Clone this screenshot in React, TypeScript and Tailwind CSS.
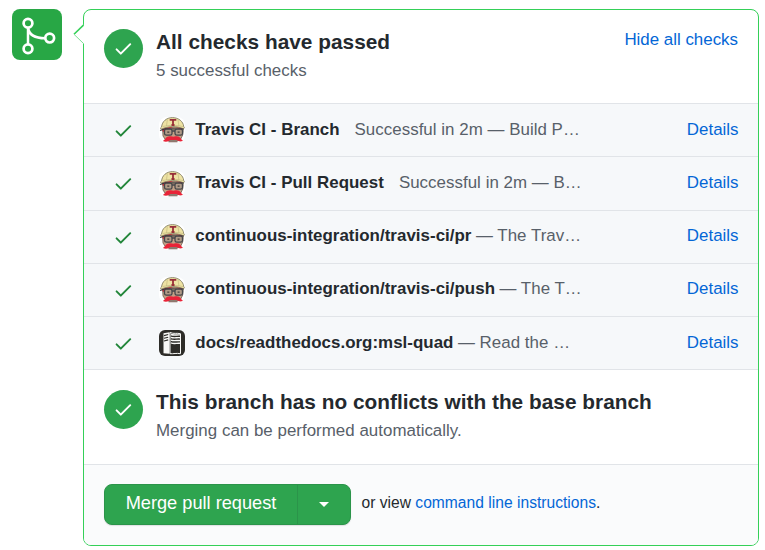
import React from "react";

const CHECK =
  "M13.78 4.22a.75.75 0 010 1.06l-7.25 7.25a.75.75 0 01-1.06 0L2.22 9.28a.75.75 0 011.06-1.06L6 10.94l6.72-6.72a.75.75 0 011.06 0z";

function Check({ className }: { className: string }) {
  return (
    <svg viewBox="0 0 16 16" className={`size-[20.8px] ${className}`} fill="currentColor">
      <path d={CHECK} />
    </svg>
  );
}

function MergeIcon() {
  return (
    <svg viewBox="0 0 50 51" className="h-[51px] w-[50px]" fill="none" stroke="#fff">
      <path d="M16 19v21M16.2 19c.8 7 6 10.200 17 10.200" strokeWidth="2.500" />
      <g strokeWidth="2.700" fill="#28a745">
        <circle cx="16" cy="14.3" r="4.400" />
        <circle cx="16" cy="39.700" r="4.400" />
        <circle cx="37.700" cy="29.100" r="4.400" />
      </g>
    </svg>
  );
}

function TravisAvatar() {
  return (
    <svg viewBox="0 0 26 26" className="size-[26px] shrink-0 rounded-[8px] bg-white">
      <path d="M3.500 10h21l-.8 8-2.700 5.600H7L4 19z" fill="#c4a084" stroke="#6b5c50" strokeWidth=".8" />
      <path d="M3 12l6-2h5L6 14l-2 1zM17 10l6 1v3z" fill="#c92f3d" />
      <path d="M2.600 10C3 4.500 7.500.6 13.500.6S24.300 4.500 24.700 9.500l.8 1.300-1 1C18 8.800 9 9 2.400 12.200l-1-1.200z" fill="#eee3a4" stroke="#77725a" strokeWidth=".8" />
      <path d="M8.300 2.600L7.500 9M19 2.600l.9 6.400M4 9.500c6-1.600 13-1.600 20 0" stroke="#c5ba80" strokeWidth=".7" fill="none" />
      <path d="M10.700 2.900h6.600M14 3.500v5M12.500 8h3" stroke="#982f38" strokeWidth="1.800" fill="none" />
      <path d="M1 13.500l5.500-1.800L24.500 12" stroke="#38383b" strokeWidth="1.100" fill="none" />
      <g fill="#b09a86" stroke="#45464a" strokeWidth="1.300">
        <rect x="5.500" y="12.200" width="7.500" height="6" rx="1.800" />
        <rect x="16" y="12.200" width="7.500" height="6" rx="1.800" />
      </g>
      <path d="M13 14h3" stroke="#45464a" strokeWidth="1.300" />
      <path d="M8.300 15.200h2M18.600 15.200h2" stroke="#403a37" strokeWidth="1.200" />
      <path d="M3.800 24c2.200-.8 2.400-3.900 5.700-4.500 2-.4 3.200-.5 4.700.3 1.500-.8 3-.7 4.800-.3 3.100.7 3.200 3.700 5.500 4.500-3 1-5.500 0-7-1h-6C9.800 24.300 7 25.400 3.800 24z" fill="#e82438" />
      <path d="M9.500 24.700h9" stroke="#6b4f45" strokeWidth="1.100" />
    </svg>
  );
}

function DocsAvatar() {
  return (
    <svg viewBox="0 0 26 26" className="size-[26px] shrink-0 rounded-[6px]">
      <rect width="26" height="26" fill="#2d2c28" />
      <path d="M4.500 3.300l6-1v21.400l-6-.5z" fill="#f8f8f6" />
      <path d="M5 5.600l4.200-1.100M5 8.300l4.200-1.100M5 11l4.200-1.100" stroke="#2d2c28" strokeWidth="1.100" />
      <path d="M11 2.500c4 1.700 6.500.2 10.500 1.200v20c-4-.8-7 .3-10.500 0z" fill="#2d2c28" stroke="#f8f8f6" strokeWidth="1" />
      <path d="M12 4.500c3 1.300 6 0 9 .4M12 7.300c3 1.300 6 0 9 .4M12 10.100c3 1.300 6 0 9 .4M12 12.900c3 1.300 6 0 9 .4" stroke="#f8f8f6" strokeWidth="1.400" fill="none" />
    </svg>
  );
}

const checks = [
  { name: "Travis CI - Branch", text: "Successful in 2m — Build P…", gap: "ml-[15px]", h: "h-[53px]", pb: "pb-[2px]", docs: false },
  { name: "Travis CI - Pull Request", text: "Successful in 2m — B…", gap: "ml-[15px]", h: "h-[54px]", pb: "pb-[2px]", docs: false },
  { name: "continuous-integration/travis-ci/pr", text: "— The Trav…", gap: "ml-[4.500px]", h: "h-[53px]", pb: "pb-[4px]", docs: false },
  { name: "continuous-integration/travis-ci/push", text: "— The T…", gap: "ml-[4.500px]", h: "h-[53px]", pb: "pb-[4px]", docs: false },
  { name: "docs/readthedocs.org:msl-quad", text: "— Read the …", gap: "ml-[4.500px]", h: "h-[53px]", pb: "pb-[2px]", docs: true },
];

function Status({ title, text }: { title: string; text: string }) {
  return (
    <div className="flex">
      <div className="flex size-[39px] shrink-0 items-center justify-center rounded-full bg-[#2ea44f] text-white">
        <Check className="" />
      </div>
      <div className="ml-[13px] whitespace-nowrap">
        <h3 className="-mt-px text-[20.8px] leading-[27px] font-bold tracking-[0.025px] text-[#24292e]">{title}</h3>
        <p className="mt-[3px] text-[16.9px] leading-[25px] tracking-[0.025px] text-[#586069]">{text}</p>
      </div>
    </div>
  );
}

export default function App() {
  return (
    <main className="flex h-[550px] w-[765px] items-start overflow-hidden bg-white pt-[9px] pl-3 font-['Liberation_Sans',Arial,sans-serif] text-[16.9px] text-[#24292e]">
      <div className="h-[51px] w-[50px] shrink-0 overflow-hidden rounded-[8px] bg-[#28a745]">
        <MergeIcon />
      </div>
      <section className="relative ml-[21px] flex h-[537px] w-[676px] flex-col rounded-[8px] border border-[#34d058]">
        <svg viewBox="0 0 11 21" className="absolute top-[14px] -left-[11px] h-[21px] w-[11px]" fill="none">
          <path d="M11 .5L1 10.300l10 9.700z" fill="#fff" />
          <path d="M10.500 1L1 10.300" stroke="#34d058" strokeWidth="1.600" />
          <path d="M1 10.300l9.500 9.200" stroke="#7fe096" strokeWidth="1" />
        </svg>
        <header className="flex h-[93px] shrink-0 justify-between pt-[19px] pr-5 pl-5">
          <Status title="All checks have passed" text="5 successful checks" />
          <a className="mt-[-2px] leading-[25px] text-[#0366d6]">Hide all checks</a>
        </header>
        {checks.map((c) => (
          <div key={c.name} className={`flex ${c.h} shrink-0 items-center border-t border-[#e1e4e8] bg-[#f6f8fa] pr-5 pl-[29px]`}>
            <Check className="text-[#22863a]" />
            <div className="ml-[25px] flex">{c.docs ? <DocsAvatar /> : <TravisAvatar />}</div>
            <div className={`ml-[10.500px] flex flex-1 leading-[25px] tracking-[0.035px] whitespace-nowrap ${c.pb}`}>
              <strong className="font-bold">{c.name}</strong>
              <span className={`text-[#586069] ${c.gap}`}>{c.text}</span>
            </div>
            <a className={`-mr-[0.500px] leading-[25px] text-[#0366d6] ${c.pb}`}>Details</a>
          </div>
        ))}
        <div className="h-[95px] shrink-0 border-t border-[#e1e4e8] pt-5 pl-5">
          <div className="[&_h3]:-mt-[2px]">
            <Status title="This branch has no conflicts with the base branch" text="Merging can be performed automatically." />
          </div>
        </div>
        <footer className="flex flex-1 items-start rounded-b-[7px] border-t border-[#e1e4e8] bg-[#fafbfc] pt-[19px] pl-5">
          <div className="flex h-[41px] w-[247px] rounded-[8px] border border-[#2b944a] bg-[#2ea44f] text-white shadow-[0_1px_1px_rgba(27,31,35,0.12)]">
            <button className="w-[193px] border-r border-[#2b944a] pb-px text-[18.2px] whitespace-nowrap">Merge pull request</button>
            <div className="flex flex-1 items-center justify-center">
              <span className="h-0 w-0 border-x-[5.2px] border-t-[5.2px] border-x-transparent border-t-white" />
            </div>
          </div>
          <p className="ml-[10.500px] pt-[7px] text-[15.6px] leading-[24px] tracking-[0.015px] whitespace-nowrap">
            or view <a className="text-[#0366d6]">command line instructions</a>.
          </p>
        </footer>
      </section>
    </main>
  );
}
